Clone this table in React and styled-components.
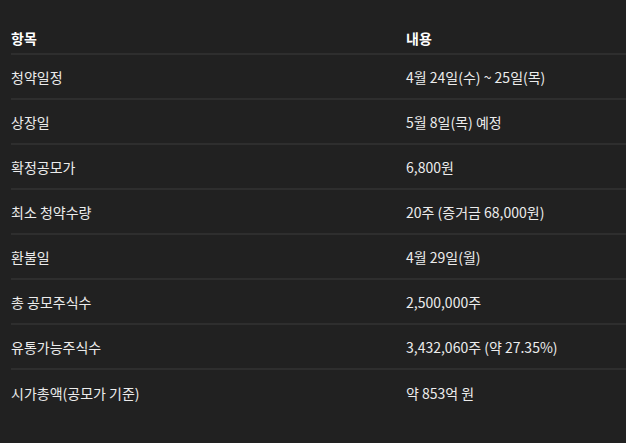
import React from 'react';
import styled, { createGlobalStyle } from 'styled-components';

const GlobalStyle = createGlobalStyle`
  html, body {
    margin: 0;
    padding: 0;
    background: #212121;
  }
  body {
    font-family: 'Noto Sans CJK KR', 'Noto Sans', sans-serif;
    color: #ececec;
  }
`;

const Page = styled.div`
  min-height: 443px;
  padding: 0 0 0 11px;
  box-sizing: border-box;
  background: #212121;
`;

const Table = styled.div`
  display: flex;
  flex-direction: column;
`;

const Row = styled.div`
  display: grid;
  grid-template-columns: 395px 1fr;
  align-items: center;
  height: ${({ $head }) => ($head ? '55px' : '45px')};
  padding-top: ${({ $head }) => ($head ? '23px' : '0')};
  box-sizing: border-box;
  border-bottom: ${({ $last }) => ($last ? 'none' : '2px solid #2e2e2e')};
`;

const Cell = styled.div`
  font-size: 14px;
  line-height: 20px;
  font-weight: ${({ $head }) => ($head ? 700 : 400)};
  color: ${({ $head }) => ($head ? '#ffffff' : '#ececec')};
  white-space: nowrap;
`;

const rows = [
  ['청약일정', '4월 24일(수) ~ 25일(목)'],
  ['상장일', '5월 8일(목) 예정'],
  ['확정공모가', '6,800원'],
  ['최소 청약수량', '20주 (증거금 68,000원)'],
  ['환불일', '4월 29일(월)'],
  ['총 공모주식수', '2,500,000주'],
  ['유통가능주식수', '3,432,060주 (약 27.35%)'],
  ['시가총액(공모가 기준)', '약 853억 원'],
];

export default function App() {
  return (
    <>
      <GlobalStyle />
      <Page>
        <Table>
          <Row $head>
            <Cell $head>항목</Cell>
            <Cell $head>내용</Cell>
          </Row>
          {rows.map(([k, v], i) => (
            <Row key={k} $last={i === rows.length - 1}>
              <Cell>{k}</Cell>
              <Cell>{v}</Cell>
            </Row>
          ))}
        </Table>
      </Page>
    </>
  );
}
